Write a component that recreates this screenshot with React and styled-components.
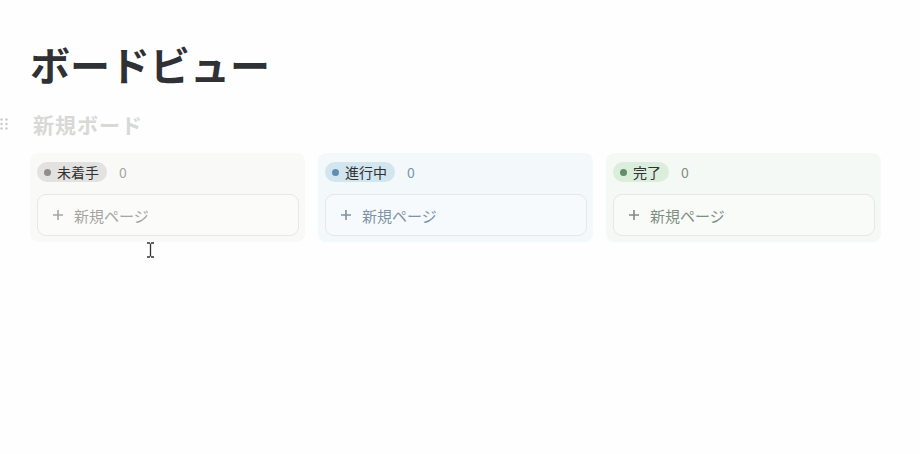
import styled, { createGlobalStyle } from "styled-components";

const Global = createGlobalStyle`
  html, body { margin:0; padding:0; background:#fefefe; }
  body { font-family: "Noto Sans CJK JP", Inter, "Liberation Sans", sans-serif; color:#37352f; }
`;

const Page = styled.main`
  position:relative; width:920px; height:454px; box-sizing:border-box;
  padding:40px 40px 0 30px; overflow:hidden;
`;

const Title = styled.h1`
  margin:0; font-size:40px; line-height:48px; font-weight:700; color:#2f3134;
`;

const BoardHeader = styled.div`
  position:relative; display:flex; align-items:center; height:24px; margin-top:24px; padding-left:3px;
  h2 { margin:0; font-size:21px; line-height:24px; font-weight:700; color:#d8d8d6; letter-spacing:1px; }
`;

const Handle = styled.svg`
  position:absolute; left:-30px; top:6px;
`;

const Columns = styled.div`
  display:grid; grid-template-columns:repeat(3, 275px); gap:13px; margin-top:17px;
`;

const Column = styled.section`
  background:${p => p.$bg}; border-radius:8px; padding:9px 6px 6px 7px;
  display:flex; flex-direction:column; gap:12px;
`;

const ColHead = styled.div`
  display:flex; align-items:center; height:20px;
`;

const Pill = styled.span`
  display:inline-flex; align-items:center; gap:6px; height:20px; padding:0 8px 0 7px;
  border-radius:10px; background:${p => p.$bg}; font-size:14px; color:#2f3134; line-height:20px;
  &::before { content:""; width:7px; height:7px; border-radius:50%; background:${p => p.$dot}; }
`;

const Count = styled.span`
  margin-left:12px; font-size:14px; color:${p => p.$color};
`;

const NewCard = styled.button`
  display:flex; align-items:center; gap:10px; height:42px; width:100%; box-sizing:border-box;
  padding:0 14px; border:1px solid #e7e7e5; border-radius:9px; background:rgba(255,255,255,0.35);
  font-family:inherit; font-size:15px; color:${p => p.$color}; text-align:left; cursor:pointer;
`;

const Cursor = styled.svg`
  position:absolute; left:146px; top:242px;
`;

const columns = [
  { name: "未着手", bg: "#f9f9f8", pill: "#e3e2e0", dot: "#8f8e8b", text: "#a6a5a2" },
  { name: "進行中", bg: "#f3f8fb", pill: "#d3e5ef", dot: "#5e8fb3", text: "#7d93a6" },
  { name: "完了", bg: "#f5f9f5", pill: "#dbeddb", dot: "#5f8e6c", text: "#7f8e83" },
];

function Plus({ color }) {
  return (
    <svg width="12" height="12" viewBox="0 0 12 12">
      <path d="M6 1v10M1 6h10" stroke={color} strokeWidth="1.6" />
    </svg>
  );
}

export default function App() {
  return (
    <>
      <Global />
      <Page>
        <Title>ボードビュー</Title>
        <BoardHeader>
          <Handle width="8" height="12" viewBox="0 0 8 12">
            {[0, 1].map(c => [0, 1, 2].map(r => (
              <circle key={c + "-" + r} cx={1.5 + c * 5} cy={1.5 + r * 4.5} r="1.2" fill="#c9c9c6" />
            )))}
          </Handle>
          <h2>新規ボード</h2>
        </BoardHeader>
        <Columns>
          {columns.map(col => (
            <Column key={col.name} $bg={col.bg}>
              <ColHead>
                <Pill $bg={col.pill} $dot={col.dot}>{col.name}</Pill>
                <Count $color={col.text}>0</Count>
              </ColHead>
              <NewCard $color={col.text}>
                <Plus color={col.text} />
                新規ページ
              </NewCard>
            </Column>
          ))}
        </Columns>
        <Cursor width="9" height="16" viewBox="0 0 9 16">
          <path d="M1 1h3M5 1h3M4.5 1.5v13M1 15h3M5 15h3" stroke="#333" strokeWidth="1.3" fill="none" />
        </Cursor>
      </Page>
    </>
  );
}
